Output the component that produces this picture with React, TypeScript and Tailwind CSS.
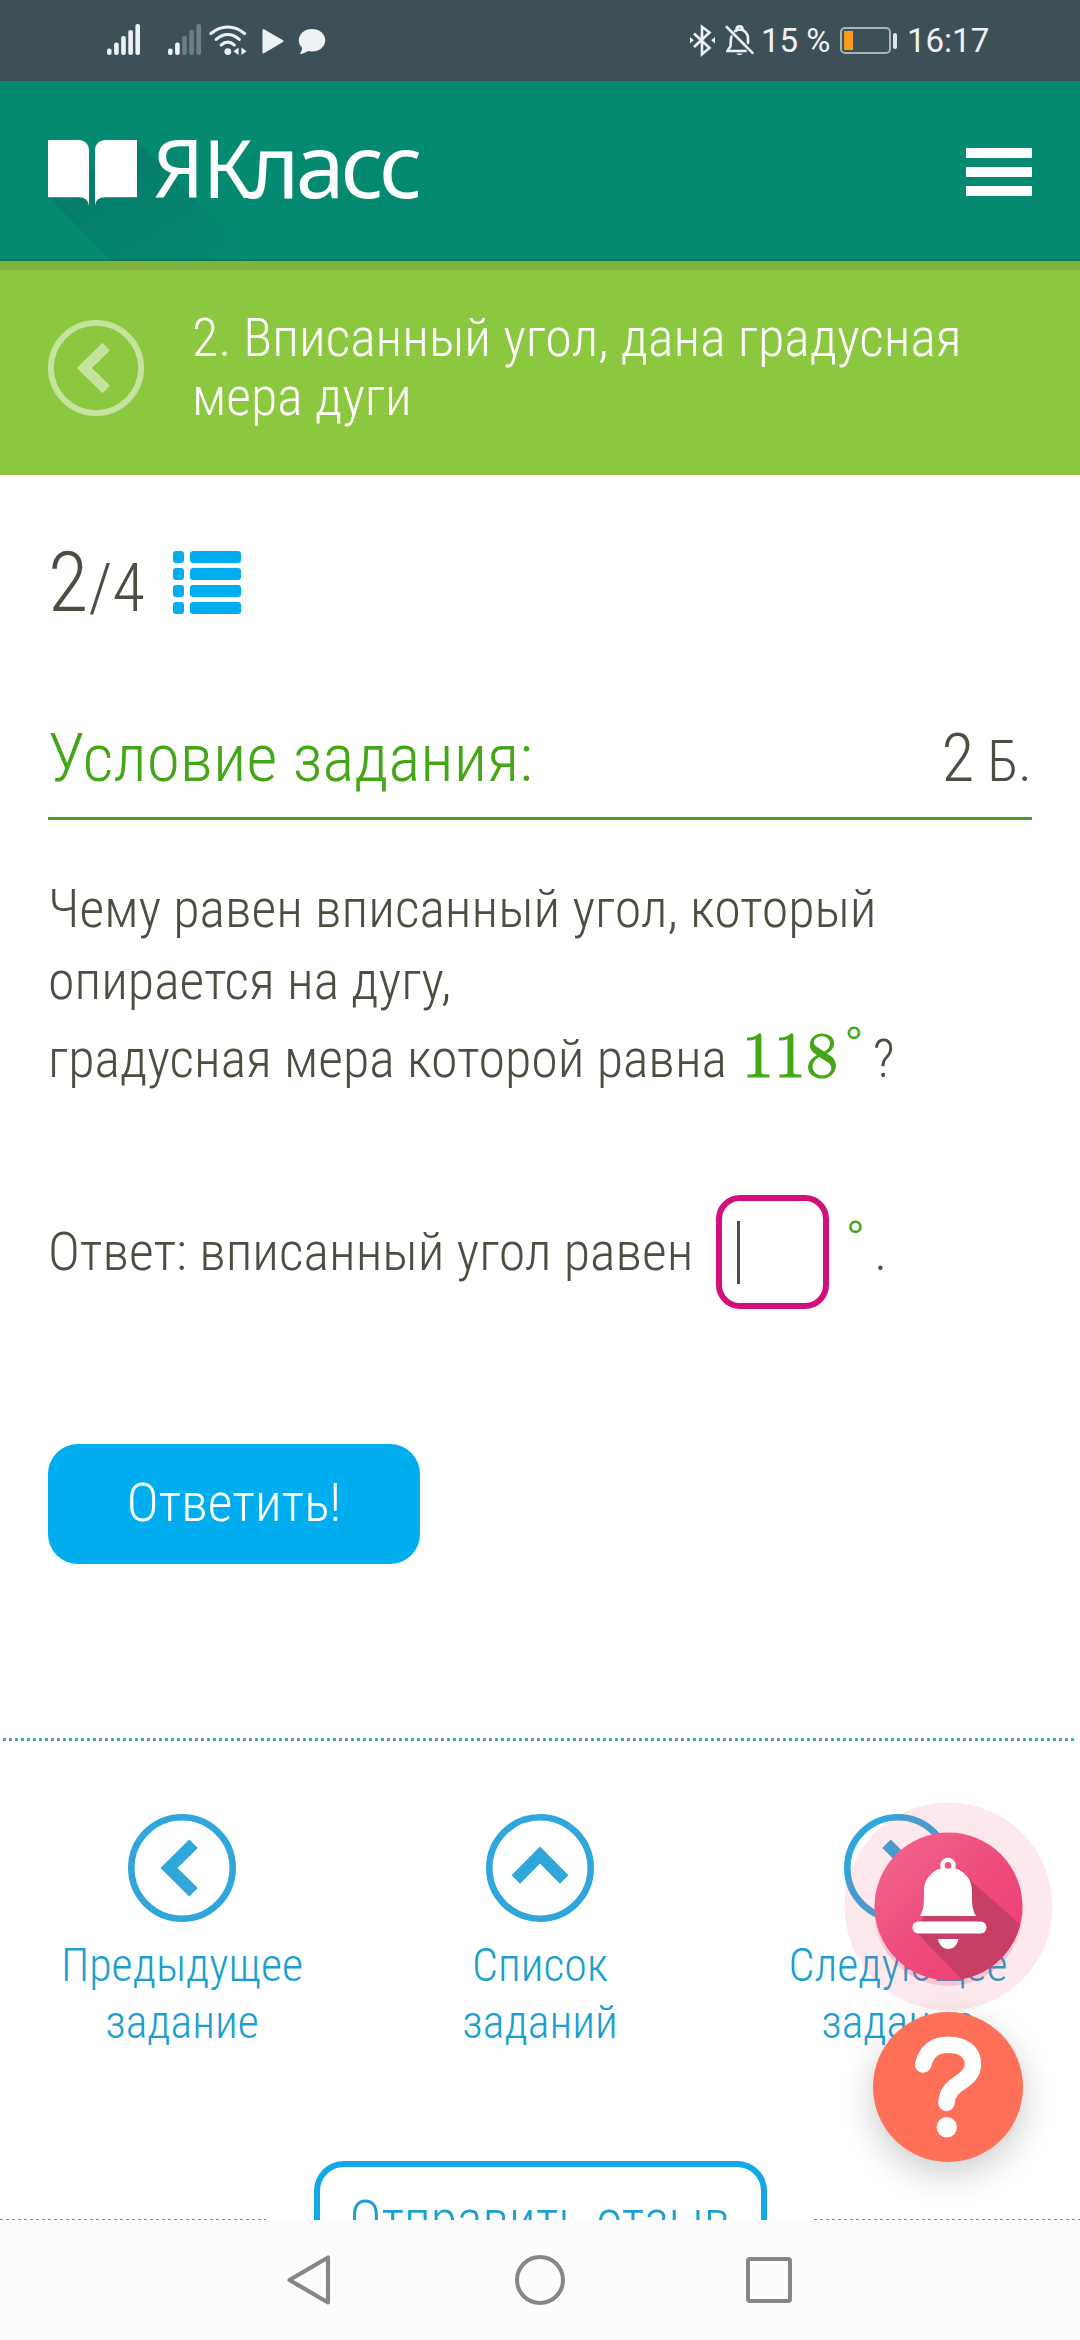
import type { ReactNode } from 'react'

const SIGNAL_BARS = [6.5, 12.5, 19, 25, 31]

function Signal({ active }: { active: number }) {
  return (
    <svg width="34" height="32" viewBox="0 0 34 32">
      {SIGNAL_BARS.map((h, i) => (
        <rect
          key={h} x={i * 7.1} y={31 - h} width="4.6" height={h} rx="2"
          fill={i < active ? '#eef2f4' : '#6c7f84'}
        />
      ))}
    </svg>
  )
}

function StatusBar() {
  return (
    <div className="flex h-[81px] items-start bg-[#3d5058] pl-[107px] pt-[24px] font-normal text-[#eef2f4]">
      <Signal active={5} />
      <div className="ml-[27px]"><Signal active={2} /></div>

      {/* Wi-Fi */}
      <svg className="ml-[7px]" width="38" height="32" viewBox="0 0 38 32" fill="none" stroke="currentColor" strokeWidth="3.2" strokeLinecap="round">
        <path d="M2 9.5C12 0.8 25.500 0.800 35.500 9.500" />
        <path d="M7.200 15.400C14.500 9 23 9 30.300 15.400" />
        <path d="M12.200 20.900C16.500 17.300 21 17.300 25.300 20.900" />
        <circle cx="18.800" cy="27.600" r="3.400" fill="currentColor" stroke="none" />
        <path d="M29.500 23.500V31L24.500 27.200ZM32.500 23.500V31L37.500 27.200Z" fill="currentColor" stroke="none" />
      </svg>

      {/* Play */}
      <svg className="ml-[15px]" width="22" height="32" viewBox="0 0 22 32" fill="currentColor">
        <path d="M1.500 6V28.500L20.500 17.200Z" stroke="currentColor" strokeWidth="2" strokeLinejoin="round" />
      </svg>

      {/* Wiadomość / czat */}
      <svg className="ml-[14px]" width="28" height="32" viewBox="0 0 28 32" fill="currentColor">
        <ellipse cx="14" cy="16.200" rx="13.200" ry="11.300" />
        <path d="M4 21.500C4.500 25 3.500 27.500 1.800 30C5 29.800 8.500 28.500 11 26Z" />
      </svg>

      {/* Bluetooth */}
      <svg className="ml-[363px]" width="27" height="33" viewBox="0 0 27 33" fill="none" stroke="currentColor" strokeWidth="2.600">
        <path d="M5 9.500L20.500 24L13 30.200V2.800L20.500 8.500L5 23" />
        <path d="M1 13V19.500L4.800 16.200ZM26 13V19.500L22.200 16.200Z" fill="currentColor" stroke="none" />
      </svg>

      {/* Wyciszony dzwonek */}
      <svg className="ml-[9px]" width="30" height="33" viewBox="0 0 30 33" fill="none" stroke="currentColor" strokeWidth="2.600" strokeLinecap="round">
        <path d="M6.500 12.500C5.500 15 5.800 20 5.500 22C5 24 3 25 2.500 27H20.500" />
        <path d="M10 7.200C12 6 13 5.500 14 5.500C20 5.500 23 10 23 14.500V19" />
        <path d="M11.500 5C11.500 1.500 17.500 1.500 17.500 5" />
        <path d="M1.800 3L27.500 28.800" />
        <path d="M11.500 29.500C12.500 31.500 16.500 31.500 17.500 29.500Z" fill="currentColor" stroke="none" />
      </svg>

      <span className="ml-[6px] mt-[-1px] w-[79px] whitespace-pre font-['Roboto'] text-[33px] leading-[36px]">15 %</span>

      {/* Bateria */}
      <div className="mt-[3px] h-[27px] w-[51px] rounded-[5px] border-2 border-[#aab4b8] p-[2px]">
        <div className="h-full w-[9px] bg-[#f99c1c]" />
      </div>
      <div className="ml-[2px] mt-[9px] h-[16px] w-[4px] rounded-[2px] bg-[#dfe4e6]" />

      <span className="ml-[10px] mt-[-1px] font-['Roboto'] text-[33px] leading-[36px]">16:17</span>
    </div>
  )
}

function Logo() {
  return (
    <div className="relative flex h-[180px] w-[420px] items-start">
      {/* długi cień książki */}
      <svg className="absolute left-0 top-0" width="220" height="180" viewBox="0 0 220 180">
        <defs>
          <linearGradient id="logoShade" x1="0" y1="0" x2="1" y2="1">
            <stop offset="0.250" stopColor="#044f4c" stopOpacity="0.220" />
            <stop offset="1" stopColor="#044f4c" stopOpacity="0.030" />
          </linearGradient>
        </defs>
        <path d="M0 116L64 180H209L89 60Z" fill="url(#logoShade)" />
      </svg>
      <svg className="relative mt-[59px]" width="89" height="66" viewBox="0 0 89 66" fill="#fff">
        <path d="M0 0H30C37 0 41 4 41 11V65.500C40 60 37 57.300 31 57.300H0Z" />
        <path d="M89 0H58C51 0 47 4 47 11V65.500C48 60 51 57.300 57 57.300H89Z" />
      </svg>
      <div className="relative ml-[16px] mt-[30px] whitespace-nowrap font-['Noto_Sans'] font-normal leading-[107px] text-white">
        <span className="text-[80px] tracking-[-1px]">Я</span>
        <span className="text-[80px] tracking-[-5px]">К</span>
        <span className="text-[88px] tracking-[-4px]">ласс</span>
      </div>
    </div>
  )
}

function Header() {
  return (
    <header className="flex h-[180px] justify-between border-b-2 border-[#067a62] bg-[#058a72] px-[48px]">
      <Logo />
      <button type="button" className="mt-[67px] flex h-[48px] w-[66px] flex-col justify-between">
        <span className="h-[10px] w-full bg-white" />
        <span className="h-[10px] w-full bg-white" />
        <span className="h-[10px] w-full bg-white" />
      </button>
    </header>
  )
}

const ROTATE = {
  left:  'rotate(0 54 54)',
  up:    'rotate(90 54 54)',
  right: 'rotate(180 54 54)',
}

function CircleArrow({ dir, className }: { dir: keyof typeof ROTATE; className: string }) {
  return (
    <svg className={className} viewBox="0 0 108 108" fill="none" stroke="currentColor">
      <circle cx="54" cy="54" r="50.700" strokeWidth="6.600" />
      <polyline points="65.500,29.800 41,54 65.500,78.200" strokeWidth="12" transform={ROTATE[dir]} />
    </svg>
  )
}

function NavItem({ dir, children }: { dir: keyof typeof ROTATE; children: ReactNode }) {
  return (
    <a className="flex flex-1 flex-col items-center text-center text-[46px] leading-[57px] text-[#1a9fd0]">
      <CircleArrow dir={dir} className="mb-[15px] size-[108px] text-[#2fa7da]" />
      {children}
    </a>
  )
}

const DOTS = 'bg-[repeating-linear-gradient(90deg,#4ba5ab_0_3px,transparent_3px_6px)]'

function Degree({ className }: { className: string }) {
  return (
    <span className={`inline-block font-['Latin_Modern_Math','Liberation_Serif'] text-[42px] font-normal text-[#43a617] [-webkit-text-stroke:0.800px_#43a617] ${className}`}>°</span>
  )
}

function BellButton() {
  return (
    <svg className="absolute left-[844px] top-[1802px]" width="209" height="209" viewBox="0 0 209 209">
      <defs>
        <linearGradient id="bellBg" x1="0" y1="0" x2="1" y2="1">
          <stop offset="0" stopColor="#f2688f" />
          <stop offset="0.550" stopColor="#ee4a7a" />
          <stop offset="1" stopColor="#f03d73" />
        </linearGradient>
        <clipPath id="bellClip"><circle cx="104.500" cy="104.500" r="74" /></clipPath>
      </defs>
      <circle cx="104.500" cy="104.500" r="104" fill="#f04a7b" fillOpacity="0.130" />
      <circle cx="104.500" cy="110" r="74" fill="#d63a6c" fillOpacity="0.180" />
      <circle cx="104.500" cy="104.500" r="74" fill="url(#bellBg)" />
      <g clipPath="url(#bellClip)">
        <path d="M127 79L209 151V209H148L73 131L80 114Z" fill="#c83f66" />
      </g>
      <g fill="#fff">
        <circle cx="104" cy="63.500" r="5.500" fill="none" stroke="#fff" strokeWidth="4.500" />
        <path d="M104 65.500C118 65.500 128 76 128 89C128 98 127.500 107 132 114H76C80.500 107 80 98 80 89C80 76 90 65.500 104 65.500Z" />
        <circle cx="104" cy="63.500" r="3.200" fill="#ef5884" />
        <rect x="68.500" y="119.500" width="74" height="12" rx="6" />
        <path d="M94 137H114.500C113.500 143 109.500 147 104.200 147C99 147 95 143 94 137Z" />
      </g>
    </svg>
  )
}

function HelpButton() {
  return (
    <button type="button" className="absolute left-[873px] top-[2012px] size-[150px] rounded-full bg-[#ff7058] shadow-[0_12px_36px_rgba(0,0,0,0.200)]">
      <svg width="150" height="150" viewBox="0 0 150 150" fill="none" stroke="#fff" strokeWidth="16.500" strokeLinecap="round">
        <path d="M50.200 52.500C54 38 63 32.700 75.500 32.700C90 32.700 100 40 100 52C100 71 73.500 70 73.500 91" />
        <circle cx="73.800" cy="115.300" r="10.200" fill="#fff" stroke="none" />
      </svg>
    </button>
  )
}

function SystemNav() {
  return (
    <div className="relative flex h-[120px] items-center bg-[#fcfcfc] text-[#868686]">
      <svg className="ml-[286px]" width="46" height="54" viewBox="0 0 46 54" fill="none" stroke="currentColor" strokeWidth="4.200" strokeLinejoin="round">
        <path d="M3.500 27L42 4.500V49.500Z" />
      </svg>
      <div className="ml-[183px] size-[50px] rounded-full border-[4px] border-current" />
      <div className="ml-[181px] size-[46px] rounded-[4px] border-[4px] border-current" />
    </div>
  )
}

export default function App() {
  return (
    <div className="relative flex h-[2340px] w-[1080px] flex-col overflow-hidden bg-white font-['Roboto_Condensed','Roboto',sans-serif] font-light text-[#4d4d41]">
      <StatusBar />
      <Header />

      {/* Tytuł zadania */}
      <div className="flex h-[214px] border-t-[9px] border-[#80b23f] bg-[#8bc83f] pl-[48px]">
        <CircleArrow dir="left" className="mt-[50px] size-[96px] text-[#c5e39f]" />
        <h1 className="ml-[48px] mt-[38px] text-[54px] leading-[59.400px] text-white">
          2. Вписанный угол, дана градусная<br />мера дуги
        </h1>
      </div>

      <main className="h-[1745px] overflow-hidden">
        <div className="px-[48px]">
          {/* Licznik zadań */}
          <div className="flex h-[150px] pt-[66px]">
            <p className="w-[125px] whitespace-nowrap text-[83px] leading-[84px]">2<span className="text-[67px] leading-none">/4</span></p>
            <div className="mt-[10px] flex w-[68px] flex-col gap-[5.500px]">
              {[1, 2, 3, 4].map(i => (
                <div key={i} className="flex h-[11.500px] gap-[6px]">
                  <span className="w-[11px] rounded-[3px] bg-[#00aeef]" />
                  <span className="flex-1 rounded-[3px] bg-[#00aeef]" />
                </div>
              ))}
            </div>
          </div>

          {/* Warunek */}
          <div className="mt-[93px] flex h-[102px] items-baseline justify-between border-b-[3px] border-[#48a023] text-[67.500px] leading-[80px]">
            <h2 className="text-[#43a617]">Условие задания:</h2>
            <p>2<span className="text-[57px] leading-none"> Б.</span></p>
          </div>

          <div className="mt-[52.500px] text-[54px] leading-[72px]">
            <p>Чему равен вписанный угол, который<br />опирается на дугу,</p>
            <p className="flex h-[80px] items-baseline leading-[80px]">
              градусная мера которой равна
              <span className="ml-[15px] font-['Latin_Modern_Math','Liberation_Serif'] text-[64px] font-normal text-[#43a617] [-webkit-text-stroke:1.200px_#43a617]">118</span>
              <Degree className="relative top-[-21px] ml-[8px]" />
              <span className="ml-[11px]">?</span>
            </p>
          </div>

          <div className="mt-[98.500px] flex items-center text-[54px] leading-[72px]">
            <span>Ответ: вписанный угол равен</span>
            <div className="ml-[23px] flex h-[114px] w-[113px] items-center rounded-[24px] border-[6px] border-[#d1107b] pl-[15px]">
              <span className="h-[63px] w-[3px] bg-[#4d4d41]" />
            </div>
            <Degree className="relative top-[-15px] ml-[18px]" />
            <span className="ml-[11px]">.</span>
          </div>

          <button type="button" className="mt-[135px] flex h-[120px] w-[372px] items-center justify-center rounded-[30px] bg-[#00aeef] pb-[3px] text-[54px] text-white">
            Ответить!
          </button>
        </div>

        <div className={`mx-[3px] mt-[174px] h-[3px] ${DOTS}`} />

        <nav className="mx-[3px] mt-[73px] flex">
          <NavItem dir="left">Предыдущее<br />задание</NavItem>
          <NavItem dir="up">Список<br />заданий</NavItem>
          <NavItem dir="right">Следующее<br />задание</NavItem>
        </nav>

        <div className="mt-[110px] flex justify-between">
          <span className={`mt-[58px] h-[3px] w-[266px] ${DOTS}`} />
          <button type="button" className="h-[120px] w-[453px] rounded-[30px] border-[6px] border-[#12a8e6] pb-[3px] text-[54px] leading-[105px] text-[#1a9fd0]">
            Отправить отзыв
          </button>
          <span className={`mt-[58px] h-[3px] w-[266px] ${DOTS}`} />
        </div>
      </main>

      <BellButton />
      <HelpButton />
      <SystemNav />
    </div>
  )
}
